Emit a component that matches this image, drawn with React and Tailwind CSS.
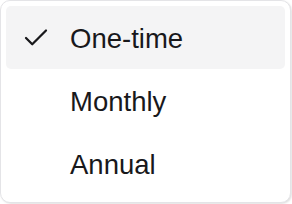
import React from "react";

function Check() {
  return (
    <svg width="30" height="30" viewBox="0 0 24 24" fill="none" stroke="#18181b" strokeWidth="1.8" strokeLinecap="round" strokeLinejoin="round">
      <path d="M20 6 9 17l-5-5" />
    </svg>
  );
}

export default function App() {
  const items = [
    { label: "One-time", selected: true },
    { label: "Monthly" },
    { label: "Annual" },
  ];
  return (
    <div className="w-[292px] h-[204px] bg-white">
      <div
        className="w-[291px] h-[203px] bg-white border border-[#e4e4e7] rounded-[10px] shadow-[1px_1px_2px_rgba(0,0,0,0.12)] p-[5px] flex flex-col"
        style={{ fontFamily: '"Liberation Sans", Arial, sans-serif' }}
      >
        {items.map((it) => (
          <div
            key={it.label}
            className={`h-[63px] flex items-center rounded-[5px] ${it.selected ? "bg-[#f4f4f5]" : ""}`}
          >
            <div className="w-[64px] flex items-center pl-[15px]">
              {it.selected ? <Check /> : null}
            </div>
            <span className="text-[27.5px] leading-none text-[#18181b] pt-[3px]">{it.label}</span>
          </div>
        ))}
      </div>
    </div>
  );
}
